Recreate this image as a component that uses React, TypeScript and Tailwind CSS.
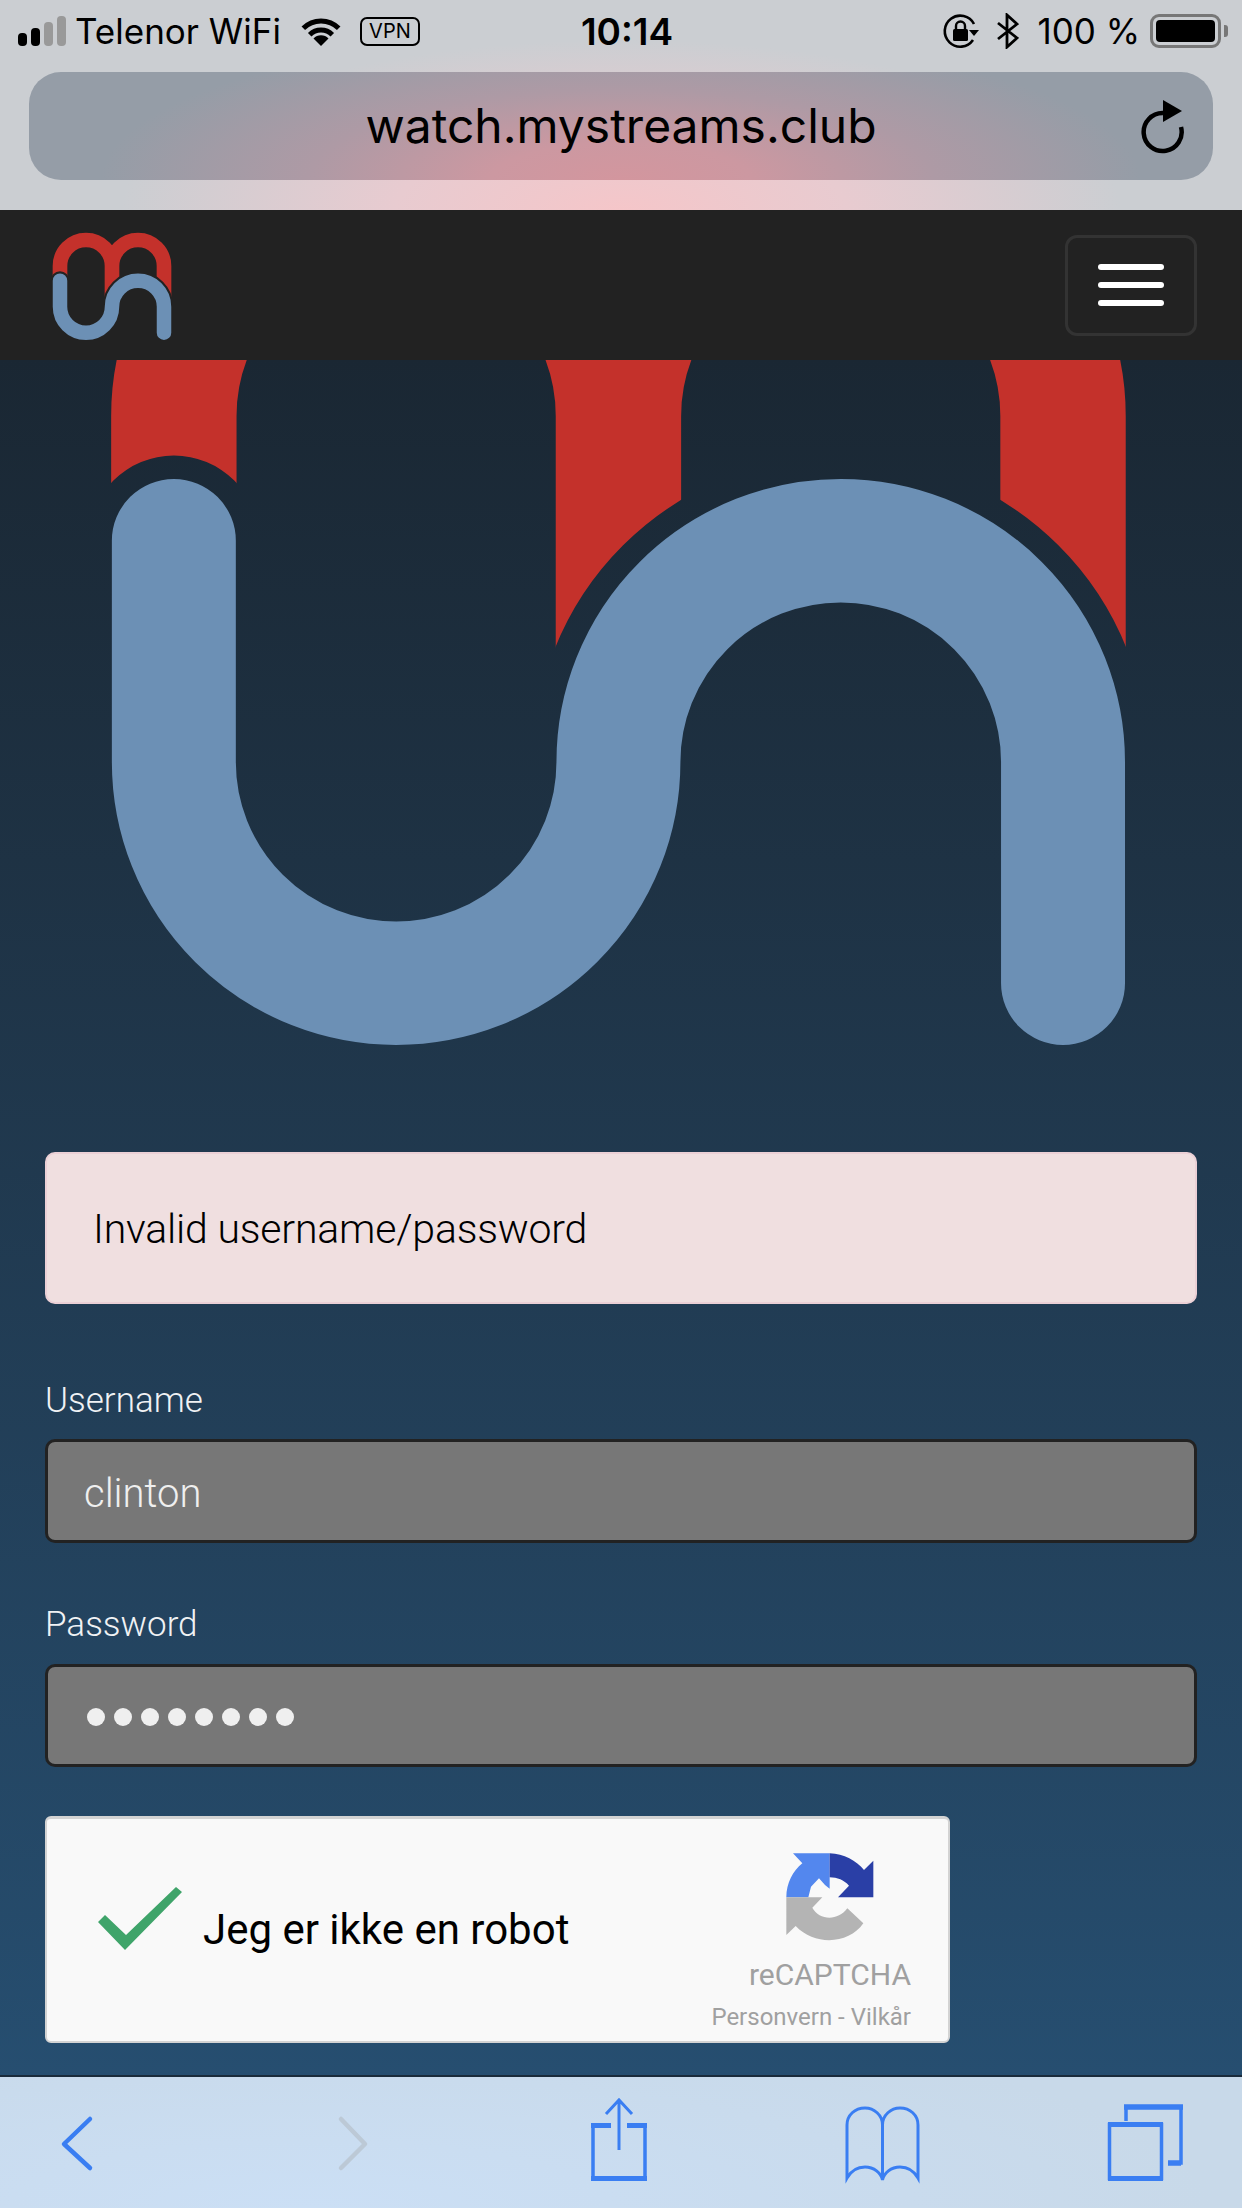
import React from 'react'

const sans = "font-['Inter','Noto_Sans',sans-serif]"
const light = "font-['Roboto','Liberation_Sans',sans-serif] font-light"
const arial = "font-['Roboto','Liberation_Sans',sans-serif]"

function Logo({ id, viewBox, width, height, gap }: { id: string; viewBox: string; width: number; height: number; gap: number }) {
  const blue = 'M60 182V260A78 78 0 0 0 216 260A78 78 0 0 1 372 260V338'
  return (
    <svg width={width} height={height} viewBox={viewBox} preserveAspectRatio="none" className="block shrink-0">
      <mask id={id} maskUnits="userSpaceOnUse" x="-10" y="0" width="460" height="400">
        <rect x="-10" y="0" width="460" height="400" fill="#fff" />
        <path d={blue} fill="none" stroke="#000" strokeWidth={gap} strokeLinecap="round" />
      </mask>
      <path
        d="M60 172V138A78 78 0 0 1 216 138V232M216 138A78 78 0 0 1 372 138V240"
        fill="none"
        stroke="#c4312b"
        strokeWidth="44"
        mask={`url(#${id})`}
      />
      <path d={blue} fill="none" stroke="#6c90b5" strokeWidth="43.5" strokeLinecap="round" />
    </svg>
  )
}

function StatusBar() {
  return (
    <div className="grid grid-cols-[1fr_auto_1fr] items-center h-[62px] pl-[18px] pr-[14px] text-black">
      <div className="flex items-center">
        <svg width="48" height="30" viewBox="0 0 48 30" className="block shrink-0">
          <rect x="0" y="17" width="9" height="13" rx="4" fill="#000" />
          <rect x="13" y="12" width="9" height="18" rx="4" fill="#000" />
          <rect x="26" y="6" width="9" height="24" rx="4" fill="#999" />
          <rect x="39" y="0" width="9" height="30" rx="4" fill="#999" />
        </svg>
        <span className={`${sans} ml-[9px] text-[35px] leading-none whitespace-nowrap`}>Telenor WiFi</span>
        <svg width="42" height="30" viewBox="0 0 42 30" className="block ml-[19px] shrink-0">
          <path d="M3.3 12.3A25 25 0 0 1 38.7 12.3" fill="none" stroke="#000" strokeWidth="5" />
          <path d="M9.7 18.7A16 16 0 0 1 32.3 18.7" fill="none" stroke="#000" strokeWidth="5" />
          <path d="M21 30L13.5 22.5A10.5 10.5 0 0 1 28.5 22.5Z" fill="#000" />
        </svg>
        <div className={`${sans} ml-[18px] w-[60px] h-[29px] border-2 border-black rounded-[7px] flex items-center justify-center text-[20px] leading-none`}>
          VPN
        </div>
      </div>
      <span className={`${sans} text-[37px] font-semibold leading-none ml-[8px]`}>10:14</span>
      <div className="flex items-center justify-end">
        <svg width="37" height="37" viewBox="0 0 37 37" className="block shrink-0">
          <path d="M30 27A15.5 15.5 0 1 1 31 11" fill="none" stroke="#000" strokeWidth="2.6" />
          <path d="M26 17H36L31 23Z" fill="#000" />
          <rect x="10" y="16" width="15" height="12" rx="1.5" fill="#000" />
          <path d="M13 16V13A4.5 4.5 0 0 1 22 13V16" fill="none" stroke="#000" strokeWidth="2.4" />
        </svg>
        <svg width="22" height="36" viewBox="0 0 22 36" className="block ml-[17px] shrink-0">
          <path d="M1 10L20 25L10 34V2L20 11L1 26" fill="none" stroke="#000" strokeWidth="2.8" />
        </svg>
        <span className={`${sans} ml-[18px] text-[35px] leading-none whitespace-nowrap`}>100 %</span>
        <div className="ml-[10px] w-[71px] h-[34px] border-[3px] border-[#777] rounded-[9px] p-[3px] shrink-0">
          <div className="w-full h-full bg-black rounded-[4px]" />
        </div>
        <div className="ml-[3px] w-[4px] h-[12px] bg-[#777] rounded-r-[3px] shrink-0" />
      </div>
    </div>
  )
}

function Chrome() {
  return (
    <div className="h-[210px] bg-[radial-gradient(ellipse_500px_170px_at_50%_100%,#f5c6c9,#e8cbd0_45%,#cbced2_100%)]">
      <StatusBar />
      <div className="relative mt-[10px] mx-[29px] h-[108px] rounded-[32px] flex items-center justify-center bg-[radial-gradient(ellipse_520px_150px_at_50%_100%,#d3969e,#cc98a1_25%,#ae9aa5_60%,#959da7_100%)]">
        <span className={`${sans} text-[48px] leading-none text-black`}>watch.mystreams.club</span>
        <svg width="48" height="56" viewBox="0 0 48 56" className="absolute right-[24px] top-[26px]">
          <path d="M40 29A19 19 0 1 1 22 15" fill="none" stroke="#000" strokeWidth="4.5" />
          <path d="M22 2L41 13L22 24Z" fill="#000" />
        </svg>
      </div>
    </div>
  )
}

function Navbar() {
  return (
    <div className="h-[150px] bg-[#222] flex items-center justify-between pl-[40px] pr-[45px]">
      <Logo id="nav-logo" viewBox="0 0 435 390" width={145} height={130} gap={56} />
      <div className="w-[132px] h-[101px] border-[3px] border-[#333] rounded-[12px] flex flex-col items-center justify-center gap-[12px]">
        <div className="w-[66px] h-[6px] rounded-full bg-white" />
        <div className="w-[66px] h-[6px] rounded-full bg-white" />
        <div className="w-[66px] h-[6px] rounded-full bg-white" />
      </div>
    </div>
  )
}

function RecaptchaIcon() {
  return (
    <svg width="120" height="115" viewBox="0 0 360 345" className="block">
      <path d="M72 40H182V146L168 135L150 115L126 140L118 172H52C52 130 72 92 100 70Z" fill="#5387ee" />
      <path d="M182 40C225 42 262 62 285 90L313 62V172H207L240 137C225 120 205 112 182 112Z" fill="#2a3fa6" />
      <path d="M52 172H160L130 203C150 240 205 245 235 205L283 250C240 312 140 320 80 258L52 285Z" fill="#b4b4b4" />
    </svg>
  )
}

function Recaptcha() {
  return (
    <div className={`${arial} mt-[49px] w-[905px] h-[227px] bg-[#f9f9f9] border-[2px] border-t-[3px] border-[#d3d3d3] rounded-[6px] flex justify-between`}>
      <div className="flex items-center pl-[51px]">
        <svg width="84" height="63" viewBox="0 0 84 63" className="block shrink-0 mb-[23px]">
          <path d="M0 35L27 63L84 5L78 0L28 48L7 28Z" fill="#3fa46a" />
        </svg>
        <span className="ml-[21px] text-[42px] leading-none text-black whitespace-nowrap">Jeg er ikke en robot</span>
      </div>
      <div className="flex flex-col items-end pr-[37px]">
        <div className="mt-[21px] mr-[22px]">
          <RecaptchaIcon />
        </div>
        <span className="text-[30px] leading-[40px] text-[#a0a0a0]">reCAPTCHA</span>
        <span className="mt-[7px] text-[24px] leading-[30px] text-[#a0a0a0] whitespace-nowrap">Personvern - Vilkår</span>
      </div>
    </div>
  )
}

function Form() {
  return (
    <div className="px-[45px]">
      <div className="h-[152px] bg-[#f0dfe0] border-2 border-[#ebd0d6] rounded-[10px] flex items-center pl-[46px] pt-[3px]">
        <span className={`${light} text-[41px] tracking-[-0.2px] leading-none text-black`}>Invalid username/password</span>
      </div>
      <div className={`${light} mt-[77px] mb-[18px] text-[35px] leading-[40px] text-[#f0f2f4]`}>Username</div>
      <div className="h-[104px] bg-[#777] border-[3px] border-[#222] rounded-[10px] flex items-center pl-[36px] pt-[5px]">
        <span className={`${light} text-[40px] leading-none text-[#efefef]`}>clinton</span>
      </div>
      <div className={`${light} mt-[62px] mb-[19px] text-[35px] leading-[40px] text-[#f0f2f4]`}>Password</div>
      <div className="h-[103px] bg-[#777] border-[3px] border-[#222] rounded-[10px] flex items-center gap-[9px] pl-[39px] pt-[3px]">
        {[0, 1, 2, 3, 4, 5, 6, 7].map((i) => (
          <div key={i} className="w-[18px] h-[18px] rounded-full bg-[#efefef]" />
        ))}
      </div>
      <Recaptcha />
    </div>
  )
}

function Toolbar() {
  const blue = '#3a7ef2'
  return (
    <div className="h-[133px] border-t-2 border-[#1a2b3b] bg-[radial-gradient(ellipse_900px_200px_at_25%_100%,#cbdff5,#c8d9e9_100%)] flex items-center pl-[55px]">
      <svg width="44" height="100" viewBox="0 0 44 100" className="block shrink-0">
        <path d="M35 26L9 51L35 75" fill="none" stroke={blue} strokeWidth="4.5" strokeLinecap="round" strokeLinejoin="round" />
      </svg>
      <svg width="44" height="100" viewBox="0 0 44 100" className="block ml-[232px] shrink-0">
        <path d="M10 26L34 51L10 75" fill="none" stroke="#bcc9d6" strokeWidth="4.5" strokeLinecap="round" strokeLinejoin="round" />
      </svg>
      <svg width="68" height="100" viewBox="0 0 68 100" className="block ml-[210px] shrink-0">
        <path d="M8 33V85H60V33" fill="none" stroke={blue} strokeWidth="3.5" />
        <path d="M6 32.5H26M42 32.5H62M6 85.5H62" fill="none" stroke={blue} strokeWidth="5" />
        <path d="M34 8V57M21 21L34 7L47 21" fill="none" stroke={blue} strokeWidth="3" />
      </svg>
      <svg width="85" height="100" viewBox="0 0 85 100" className="block ml-[187px] shrink-0">
        <path
          d="M42.5 32C42.5 22 34 15 25 15C15 15 7 22 7 32V85C11 78 17 74 25 74C34 74 41 80 42.5 87C44 80 51 74 60 74C68 74 74 78 78 85V32C78 22 70 15 60 15C51 15 42.5 22 42.5 32V87"
          fill="none"
          stroke={blue}
          strokeWidth="3"
        />
      </svg>
      <svg width="90" height="100" viewBox="0 0 90 100" className="block ml-[175px] shrink-0">
        <path d="M26 28V14H81V70H68" fill="none" stroke={blue} strokeWidth="3.5" />
        <path d="M24 14H83M68 70H81" fill="none" stroke={blue} strokeWidth="5.5" />
        <rect x="9.5" y="31.5" width="52" height="54" fill="none" stroke={blue} strokeWidth="3.5" />
        <path d="M8 31.5H63M8 85.5H63" fill="none" stroke={blue} strokeWidth="5" />
      </svg>
    </div>
  )
}

export default function App() {
  return (
    <div className="w-[1242px] h-[2208px] overflow-hidden">
      <Chrome />
      <Navbar />
      <main className="h-[1715px] bg-gradient-to-b from-[#1a2733] to-[#264e70]">
        <Logo id="big-logo" viewBox="-1 118.3 435.8 279.2" width={1242} height={792} gap={60} />
        <Form />
      </main>
      <Toolbar />
    </div>
  )
}
